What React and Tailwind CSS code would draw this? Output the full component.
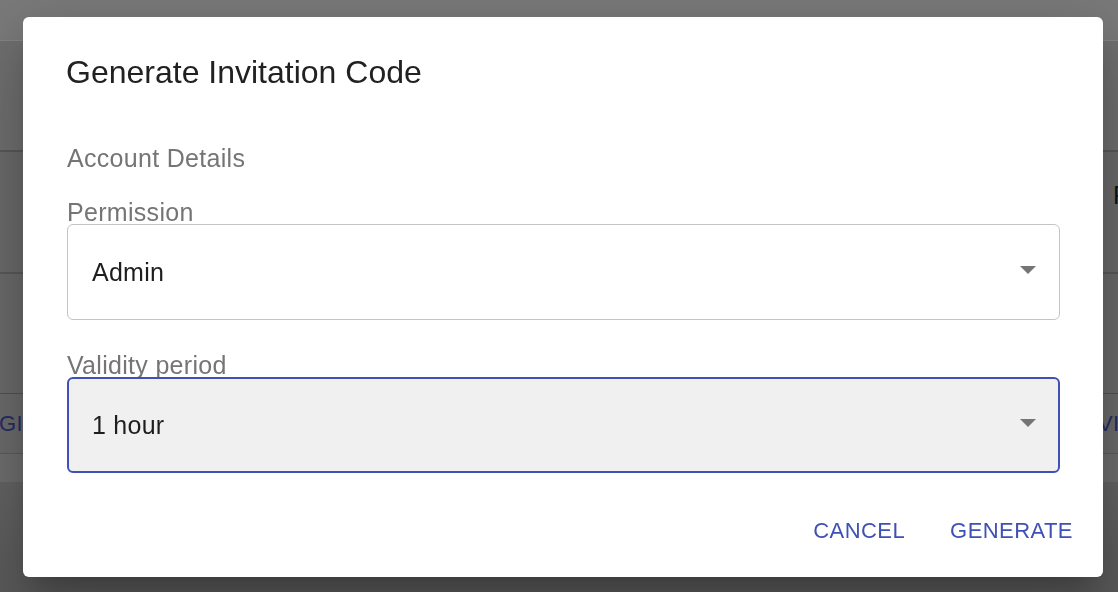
import React from "react";

function Arrow() {
  return (
    <svg width="16" height="8" viewBox="0 0 16 8" className="ml-auto mb-[5px] shrink-0">
      <polygon points="0,0 16,0 8,8" fill="#757575" />
    </svg>
  );
}

function SelectField({ label, value, focused, first }) {
  return (
    <>
      <label
        className={
          (first ? "mt-[27px] " : "mt-[33px] ") +
          "text-[25px] leading-[24px] tracking-[0.012em] text-[#757575]"
        }
      >
        {label}
      </label>
      <div
        className={
          focused
            ? "h-[96px] rounded-[6px] border-2 border-[#3f51b5] bg-[#f0f0f0] flex items-center pl-[23px] pr-[22px]"
            : "h-[96px] rounded-[6px] border border-[#c4c4c4] bg-white flex items-center pl-[24px] pr-[23px]"
        }
      >
        <span className="text-[25px] leading-[30px] tracking-[0.01em] text-[#1e1e1e]">{value}</span>
        <Arrow />
      </div>
    </>
  );
}

export default function App() {
  return (
    <div className="relative w-full h-[592px] overflow-hidden bg-[#606060] font-['Liberation_Sans',Arial,sans-serif]">
      {/* background page (dimmed) */}
      <div className="flex flex-col w-full">
        <div className="h-[40px] bg-[#7a7a7a]" />
        <div className="h-[1px] bg-[#858585]" />
        <div className="h-[109px] bg-[#707070]" />
        <div className="h-[2px] bg-[#595959]" />
        <div className="h-[120px] bg-[#6b6b6b] flex pt-[28px]">
          <div className="w-[1113px] shrink-0" />
          <span className="text-[25px] leading-[30px] text-[#121212]">F</span>
        </div>
        <div className="h-[2px] bg-[#5a5a5a]" />
        <div className="h-[119px] bg-[#6b6b6b]" />
        <div className="h-[1px] bg-[#4c5078]" />
        <div className="h-[59px] bg-[#6c6c6c] grid grid-cols-[1075px_1fr] pt-[17px] text-[22px] leading-[26px] text-[#262d66] tracking-[0.02em]">
          <span className="-ml-[1px]">GI</span>
          <span className="whitespace-nowrap">INVITATIONS</span>
        </div>
        <div className="h-[1px] bg-[#5c5c5c]" />
        <div className="h-[28px] bg-[#6f6f6f]" />
        <div className="h-[110px] bg-gradient-to-b from-[#646464] to-[#5a5a5a]" />
      </div>

      {/* dialog overlay */}
      <div className="fixed inset-0 flex items-start justify-start pl-[23px] pt-[17px]">
        <div className="w-[1080px] h-[560px] bg-white rounded-[6px] shadow-[0_17px_23px_-11px_rgba(0,0,0,0.2),0_37px_59px_5px_rgba(0,0,0,0.14),0_14px_72px_12px_rgba(0,0,0,0.12)] flex flex-col pt-[35px] pl-[44px] pr-[43px]">
          <h2 className="text-[32px] leading-[40px] text-[#212121] -ml-[1px]">
            Generate Invitation Code
          </h2>
          <p className="mt-[51px] text-[25px] leading-[30px] tracking-[0.012em] text-[#757575]">
            Account Details
          </p>
          <SelectField label="Permission" value="Admin" first />
          <SelectField label="Validity period" value="1 hour" focused />
          <div className="mt-[45px] flex justify-end gap-[21px] -mr-[25px]">
            <button className="px-[12px] text-[22px] leading-[26px] tracking-[0.02em] text-[#3f51b5]">
              CANCEL
            </button>
            <button className="px-[12px] text-[22px] leading-[26px] tracking-[0.02em] text-[#3f51b5]">
              GENERATE
            </button>
          </div>
        </div>
      </div>
    </div>
  );
}
